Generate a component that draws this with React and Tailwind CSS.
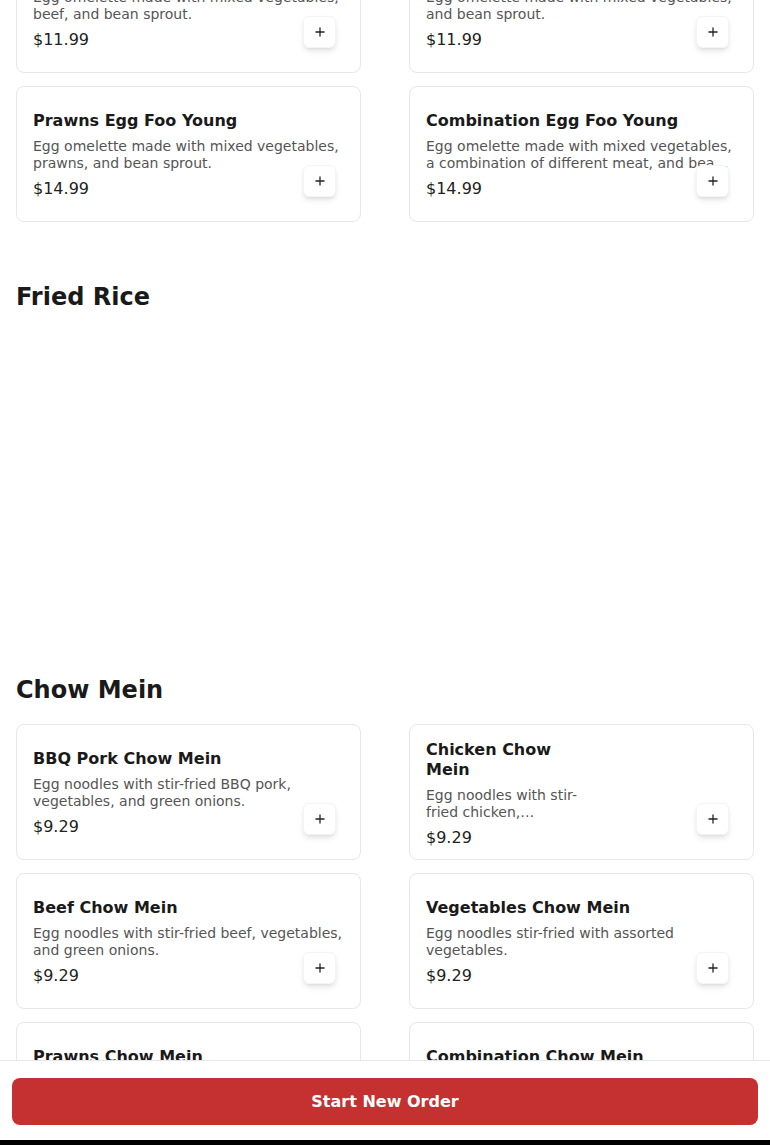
import React from 'react';
import { Plus } from 'lucide-react';

const eggFooYoung = [
    { name: 'Beef Egg Foo Young', desc: 'Egg omelette made with mixed vegetables, beef, and bean sprout.', price: '$11.99' },
    { name: 'Vegetables Egg Foo Young', desc: 'Egg omelette made with mixed vegetables, and bean sprout.', price: '$11.99' },
    { name: 'Prawns Egg Foo Young', desc: 'Egg omelette made with mixed vegetables, prawns, and bean sprout.', price: '$14.99' },
    { name: 'Combination Egg Foo Young', desc: 'Egg omelette made with mixed vegetables, a combination of different meat, and bean sprout.', price: '$14.99' },
];

const chowMein = [
    { name: 'BBQ Pork Chow Mein', desc: 'Egg noodles with stir-fried BBQ pork, vegetables, and green onions.', price: '$9.29' },
    { name: 'Chicken Chow Mein', desc: 'Egg noodles with stir-fried chicken, vegetables, and green onions.', price: '$9.29', narrow: true },
    { name: 'Beef Chow Mein', desc: 'Egg noodles with stir-fried beef, vegetables, and green onions.', price: '$9.29' },
    { name: 'Vegetables Chow Mein', desc: 'Egg noodles stir-fried with assorted vegetables.', price: '$9.29' },
    { name: 'Prawns Chow Mein', desc: 'Egg noodles with stir-fried prawns, vegetables, and green onions.', price: '$12.99' },
    { name: 'Combination Chow Mein', desc: 'Egg noodles with a combination of different meat and vegetables.', price: '$12.99' },
];

const MenuCard = ({ item }) => (
    <div className="relative h-[136px] rounded-lg border border-gray-200 bg-white px-4 flex items-center">
        <div className={item.narrow ? 'w-[160px] pt-[5px]' : 'w-full pt-[3px]'}>
            <h3 className="text-base font-bold leading-5 text-[#1a1a1a]">{item.name}</h3>
            <p className="mt-[7px] text-sm leading-tight text-[#555] line-clamp-2">{item.desc}</p>
            <div className="mt-1 text-base leading-6 text-[#222]">{item.price}</div>
        </div>
        <button
            className="absolute right-6 bottom-6 w-[33px] h-8 rounded-md bg-white border border-gray-100 shadow-md flex items-center justify-center text-[#222]"
            aria-label="Add"
        >
            <Plus size={14} strokeWidth={2.2} />
        </button>
    </div>
);

const Section = ({ title, items, emptyHeight }) => (
    <section className="mb-[59px]">
        <h2 className="text-2xl font-bold leading-8 text-[#1a1a1a] mb-[18px]">{title}</h2>
        {items ? (
            <div className="grid grid-cols-2 gap-x-12 gap-y-[13px]">
                {items.map((item) => (
                    <MenuCard key={item.name} item={item} />
                ))}
            </div>
        ) : (
            <div style={{ height: emptyHeight }} />
        )}
    </section>
);

export default function App() {
    return (
        <div className="min-h-screen bg-white font-['DejaVu_Sans',sans-serif] overflow-hidden">
            <div className="px-4 -mt-[63px] pb-[140px]">
                {/* tail of the Egg Foo Young list, scrolled partly off screen */}
                <div className="grid grid-cols-2 gap-x-12 gap-y-[13px] mb-[59px]">
                    {eggFooYoung.map((item) => (
                        <MenuCard key={item.name} item={item} />
                    ))}
                </div>
                <Section title="Fried Rice" emptyHeight={284} />
                <Section title="Chow Mein" items={chowMein} />
            </div>

            <div className="fixed bottom-0 left-0 right-0 bg-white border-t border-gray-200">
                <div className="px-3 pt-[17px] pb-[15px]">
                    <button className="w-full h-[47px] rounded-lg bg-[#c53030] text-white text-base font-bold">
                        Start New Order
                    </button>
                </div>
                <div className="h-[5px] bg-black" />
            </div>
        </div>
    );
}
